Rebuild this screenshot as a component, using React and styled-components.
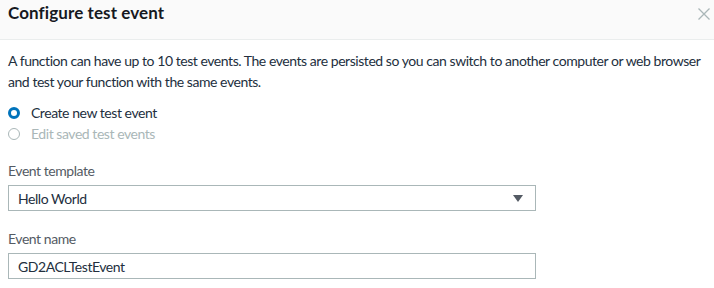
import styled, { createGlobalStyle } from 'styled-components';

const Global = createGlobalStyle`
  body {
    margin: 0;
    background: #fff;
    font-family: Lato, "Open Sans", sans-serif;
    color: #16191f;
  }
`;

const Modal = styled.div`
  width: 714px;
  height: 288px;
  overflow: hidden;
  background: #fff;
`;

const Header = styled.div`
  height: 40px;
  box-sizing: border-box;
  display: flex;
  align-items: flex-start;
  justify-content: space-between;
  padding: 1px 4px 0 8px;
  background: #fafafa;
  border-bottom: 1px solid #eaeded;
`;

const Title = styled.h2`
  margin: 0;
  font-size: 17px;
  font-weight: 700;
  line-height: 24px;
  letter-spacing: 0.1px;
  color: #16191f;
`;

const Close = styled.button`
  border: 0;
  background: none;
  padding: 0;
  margin-top: 7px;
  display: flex;
  cursor: pointer;
`;

const Body = styled.div`
  padding: 10px 8px 0 8px;
  letter-spacing: -0.45px;
`;

const Intro = styled.p`
  margin: 0;
  font-size: 14px;
  line-height: 21px;
  color: #232f3e;
`;

const RadioGroup = styled.div`
  margin-top: 10px;
  display: flex;
  flex-direction: column;
`;

const RadioRow = styled.label`
  display: flex;
  align-items: center;
  gap: 11px;
  height: 21px;
  font-size: 14px;
  color: ${({ disabled }) => (disabled ? '#aab7b8' : '#232f3e')};
`;

const Dot = styled.span`
  width: 12px;
  height: 12px;
  box-sizing: border-box;
  border-radius: 50%;
  border: ${({ checked }) => (checked ? '3.5px solid #0073bb' : '1.5px solid #aab7b8')};
  background: #fff;
`;

const Field = styled.div`
  margin-top: ${({ top }) => top}px;
  width: 528px;
`;

const Label = styled.div`
  font-size: 14px;
  line-height: 21px;
  color: #545b64;
  margin-bottom: 4px;
`;

const Box = styled.div`
  height: 26px;
  box-sizing: border-box;
  border: 1px solid #aab7b8;
  display: flex;
  align-items: center;
  justify-content: space-between;
  padding: 0 10px 0 9px;
  font-size: 14px;
  color: #232f3e;
`;

const Caret = styled.span`
  width: 0;
  height: 0;
  border-left: 5px solid transparent;
  border-right: 5px solid transparent;
  border-top: 7px solid #545b64;
  margin-right: 2px;
`;

export default function App() {
  return (
    <Modal>
      <Global />
      <Header>
        <Title>Configure test event</Title>
        <Close aria-label="Close">
          <svg width="12" height="12" viewBox="0 0 12 12">
            <path d="M0.5 0.5 L11.5 11.5 M11.5 0.5 L0.5 11.5" stroke="#aab7b8" strokeWidth="1.3" fill="none" />
          </svg>
        </Close>
      </Header>
      <Body>
        <Intro>
          A function can have up to 10 test events. The events are persisted so you can switch to another computer or web browser
          and test your function with the same events.
        </Intro>
        <RadioGroup>
          <RadioRow>
            <Dot checked />
            Create new test event
          </RadioRow>
          <RadioRow disabled>
            <Dot />
            Edit saved test events
          </RadioRow>
        </RadioGroup>
        <Field top={16}>
          <Label>Event template</Label>
          <Box>
            Hello World
            <Caret />
          </Box>
        </Field>
        <Field top={17}>
          <Label>Event name</Label>
          <Box>GD2ACLTestEvent</Box>
        </Field>
      </Body>
    </Modal>
  );
}
